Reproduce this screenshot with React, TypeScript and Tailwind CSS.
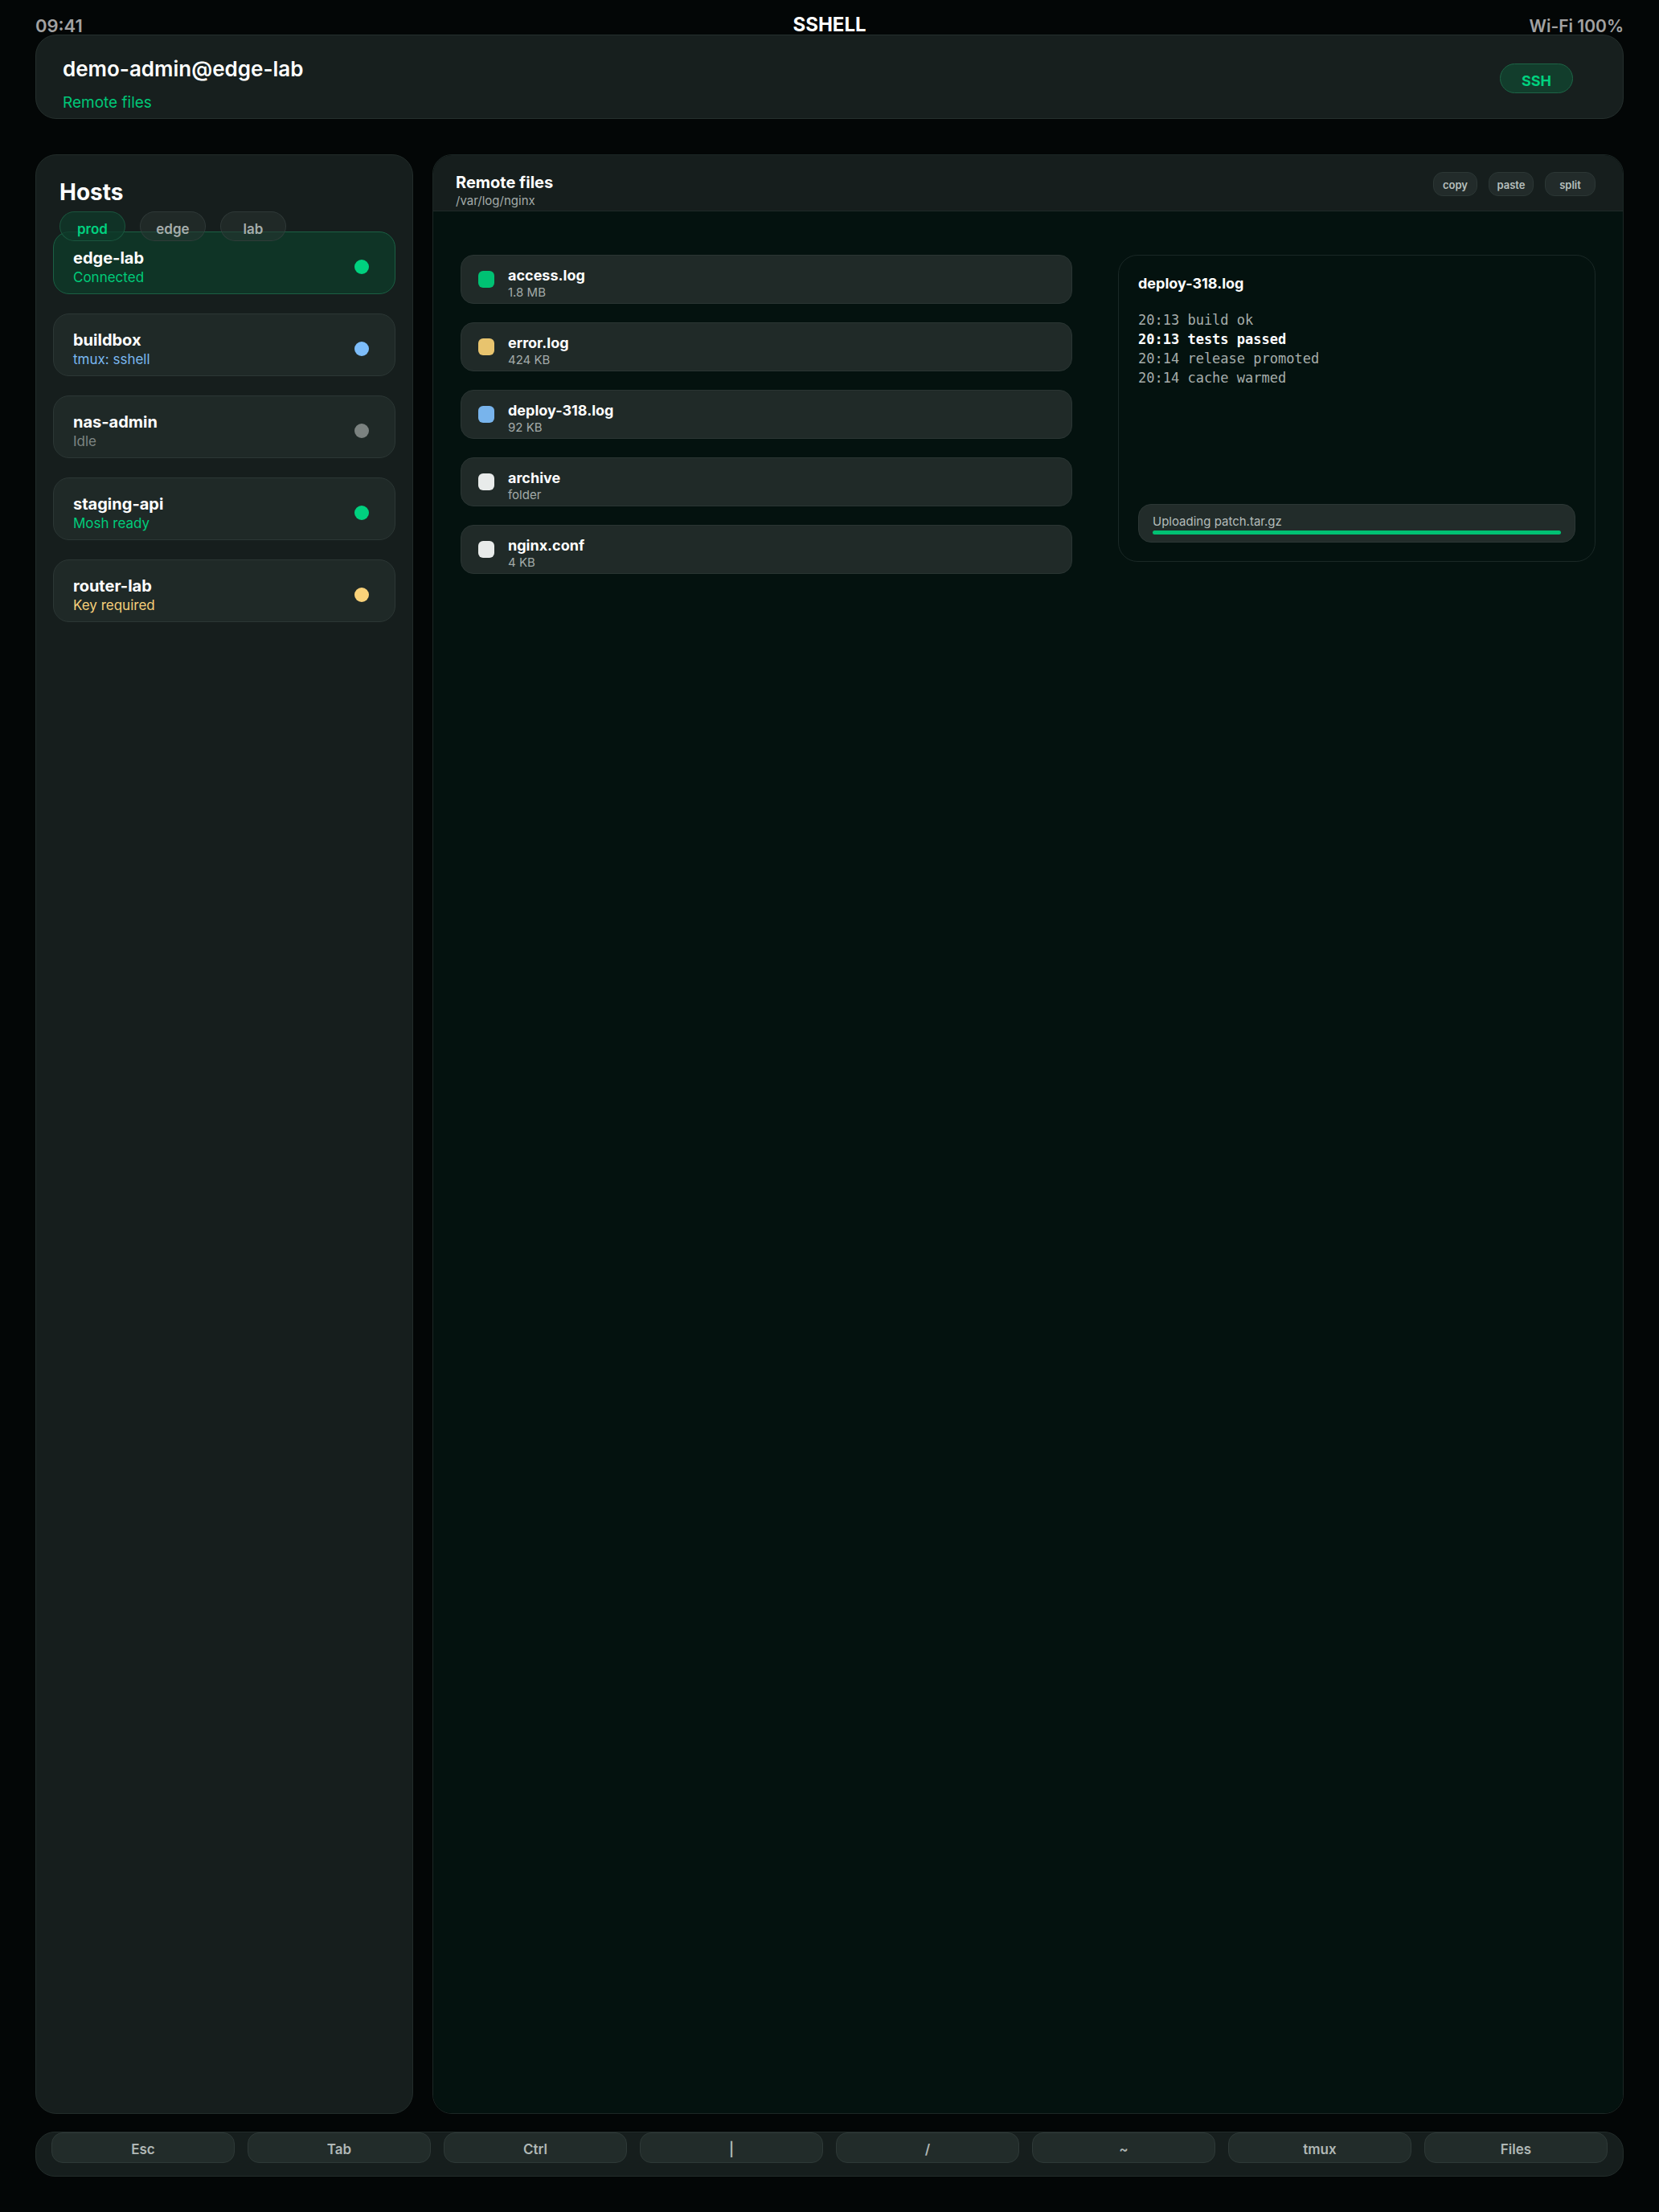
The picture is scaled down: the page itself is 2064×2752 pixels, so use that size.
import React from "react";

const hosts = [
    { name: "edge-lab", status: "Connected", text: "text-[#00cc7a]", dot: "bg-[#00d17f]", active: true },
    { name: "buildbox", status: "tmux: sshell", text: "text-[#7ab8f0]", dot: "bg-[#7dbdfa]" },
    { name: "nas-admin", status: "Idle", text: "text-[#7d8583]", dot: "bg-[#7b8280]" },
    { name: "staging-api", status: "Mosh ready", text: "text-[#00cc7a]", dot: "bg-[#00d17f]" },
    { name: "router-lab", status: "Key required", text: "text-[#f5cf7a]", dot: "bg-[#f9d27a]" },
];

const files = [
    { name: "access.log", size: "1.8 MB", color: "bg-[#00c173]" },
    { name: "error.log", size: "424 KB", color: "bg-[#e8c46e]" },
    { name: "deploy-318.log", size: "92 KB", color: "bg-[#78b4ec]" },
    { name: "archive", size: "folder", color: "bg-[#e8ebea]" },
    { name: "nginx.conf", size: "4 KB", color: "bg-[#e8ebea]" },
];

const logLines = [
    { text: "20:13 build ok", strong: false },
    { text: "20:13 tests passed", strong: true },
    { text: "20:14 release promoted", strong: false },
    { text: "20:14 cache warmed", strong: false },
];

const keys = ["Esc", "Tab", "Ctrl", "|", "/", "~", "tmux", "Files"];

const chips = [
    { label: "prod", active: true },
    { label: "edge", active: false },
    { label: "lab", active: false },
];

const actions = [
    { label: "copy", w: "w-[55px]" },
    { label: "paste", w: "w-[56px]" },
    { label: "split", w: "w-[63px]" },
];

export default function App() {
    return (
        <div
            className="w-[2064px] h-[2752px] bg-[#030606] px-[44px] pb-[44px] flex flex-col text-white"
            style={{ fontFamily: "Inter, 'Noto Sans', sans-serif" }}>
            {/* status bar */}
            <div className="h-[43px] grid grid-cols-3 items-end leading-none">
                <span className="text-[22px] font-semibold text-[#a2a2a2]">09:41</span>
                <span className="text-[24px] font-bold text-center">SSHELL</span>
                <span className="text-[21px] font-semibold text-[#a2a2a2] text-right">Wi-Fi 100%</span>
            </div>

            {/* header */}
            <div className="h-[105px] rounded-[26px] border border-[#252f2d] bg-[#171f1e] pl-[33px] pr-[62px] pt-[24px] flex items-start justify-between">
                <div className="flex flex-col">
                    <span className="text-[26px] font-semibold leading-[35px]">demo-admin@edge-lab</span>
                    <span className="text-[19px] leading-[28px] text-[#00c878] mt-[11px]">Remote files</span>
                </div>
                <div className="w-[91px] h-[37px] mt-[11px] rounded-full border border-[#1d6446] bg-[#123d2c] flex items-center justify-center pt-[6px] text-[18px] font-bold text-[#00d17f]">
                    SSH
                </div>
            </div>

            {/* panels */}
            <div className="flex-1 flex gap-[24px] mt-[44px] min-h-0">
                <div className="w-[470px] rounded-[26px] border border-[#222c2a] bg-[#161e1d] px-[21px] pt-[29px] flex flex-col">
                    <span className="ml-[8px] text-[28px] font-bold leading-[35px]">Hosts</span>
                    <div className="relative z-10 ml-[8px] mt-[6px] h-[25px] flex gap-[18px]">
                        {chips.map((c) => (
                            <div
                                key={c.label}
                                className={
                                    c.active
                                        ? "w-[82px] h-[37px] shrink-0 rounded-full border border-[#1d5e43]/80 bg-[#0f3a29]/75 flex items-center justify-center pt-[9px] text-[17px] font-semibold text-[#00d17f]"
                                        : "w-[82px] h-[37px] shrink-0 rounded-full border border-[#3a4543]/60 bg-[#2a3432]/50 flex items-center justify-center pt-[9px] text-[17px] font-semibold text-[#a5adab]"
                                }>
                                {c.label}
                            </div>
                        ))}
                    </div>
                    <div className="flex flex-col gap-[24px]">
                        {hosts.map((h) => (
                            <div
                                key={h.name}
                                className={
                                    h.active
                                        ? "h-[78px] rounded-[20px] border border-[#1b6044] bg-[#0f3426] pl-[24px] pr-[32px] pt-[9px] flex items-center justify-between"
                                        : "h-[78px] rounded-[20px] border border-[#2c3735] bg-[#1f2927] pl-[24px] pr-[32px] pt-[9px] flex items-center justify-between"
                                }>
                                <div className="flex flex-col">
                                    <span className="text-[20px] font-bold leading-[26px]">{h.name}</span>
                                    <span className={`text-[17px] leading-[22px] ${h.text}`}>{h.status}</span>
                                </div>
                                <span className={`w-[18px] h-[18px] rounded-full ${h.dot}`} />
                            </div>
                        ))}
                    </div>
                </div>

                <div className="flex-1 rounded-[24px] border border-[#1c2725] overflow-hidden flex flex-col">
                    <div className="h-[70px] shrink-0 bg-[#161e1d] border-b border-[#1f2a28] pl-[28px] pr-[34px] pt-[22px] flex items-start justify-between">
                        <div className="flex flex-col">
                            <span className="text-[20px] font-bold leading-[25px]">Remote files</span>
                            <span className="text-[15px] leading-[20px] text-[#a3aba9]">/var/log/nginx</span>
                        </div>
                        <div className="flex gap-[14px] -mt-[1px]">
                            {actions.map((b) => (
                                <div
                                    key={b.label}
                                    className={`h-[30px] ${b.w} rounded-[12px] border border-[#2c3735] bg-[#222b2a] flex items-center justify-center pt-[3px] text-[13px] font-semibold text-[#b8c0be]`}>
                                    {b.label}
                                </div>
                            ))}
                        </div>
                    </div>

                    <div className="flex-1 bg-[#04120f] px-[34px] pt-[54px] flex items-start gap-[57px]">
                        <div className="flex-1 flex flex-col gap-[23px]">
                            {files.map((f) => (
                                <div
                                    key={f.name}
                                    className="h-[61px] rounded-[16px] border border-[#2a3533] bg-[#202a28] pl-[21px] flex items-center gap-[17px]">
                                    <span className={`w-[20px] h-[21px] rounded-[6px] ${f.color}`} />
                                    <div className="flex flex-col pt-[9px]">
                                        <span className="text-[18px] font-bold leading-[23px]">{f.name}</span>
                                        <span className="text-[15px] leading-[19px] text-[#a3aba9]">{f.size}</span>
                                    </div>
                                </div>
                            ))}
                        </div>

                        <div className="w-[594px] h-[382px] shrink-0 rounded-[24px] border border-[#1a2826] pt-[23px] px-[24px] pb-[23px] flex flex-col">
                            <span className="text-[18px] font-bold leading-[24px]">deploy-318.log</span>
                            <div
                                className="mt-[21px] flex flex-col text-[17px] leading-[24px]"
                                style={{ fontFamily: "'DejaVu Sans Mono', 'Liberation Mono', monospace" }}>
                                {logLines.map((l) => (
                                    <span key={l.text} className={l.strong ? "font-bold text-white" : "text-[#a6adab]"}>
                                        {l.text}
                                    </span>
                                ))}
                            </div>
                            <div className="mt-auto h-[48px] rounded-[16px] border border-[#2c3735] bg-[#222c2a] px-[17px] pt-[11px] flex flex-col">
                                <span className="text-[15px] leading-[20px] text-[#b4bcba]">Uploading patch.tar.gz</span>
                                <div className="h-[5px] mt-[1px] rounded-full bg-[#00c173]" />
                            </div>
                        </div>
                    </div>
                </div>
            </div>

            {/* key bar */}
            <div className="mt-[22px] h-[56px] rounded-[24px] border border-[#232d2b] bg-[#161e1d] px-[19px] grid grid-cols-8 gap-[16px] items-start">
                {keys.map((k) => (
                    <div
                        key={k}
                        className="h-[38px] rounded-[14px] border border-[#2e3937] bg-[#222c2a] flex items-center justify-center pt-[5px] text-[17px] font-semibold text-[#b0b8b6]">
                        {k}
                    </div>
                ))}
            </div>
        </div>
    );
}
